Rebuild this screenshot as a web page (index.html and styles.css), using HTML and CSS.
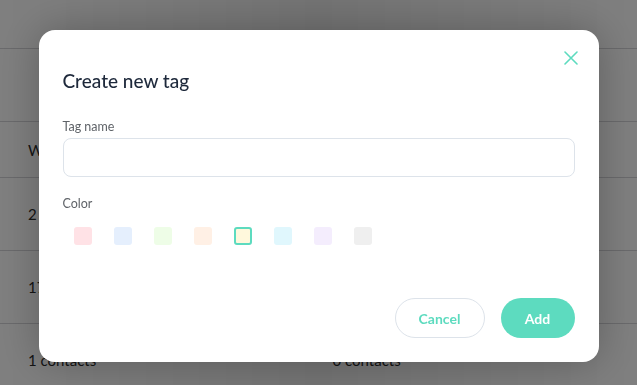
FILE: index.html
```html
<!DOCTYPE html>
<html lang="en">
<head>
<meta charset="utf-8">
<title>Create new tag</title>
<link rel="stylesheet" href="styles.css">
</head>
<body>
<div class="page">
  <div class="row row-top"></div>
  <div class="row row-filter"></div>
  <div class="row row-head"><span class="cell">W</span><span class="cell"></span></div>
  <div class="row"><span class="cell">2</span><span class="cell"></span></div>
  <div class="row"><span class="cell">17</span><span class="cell"></span></div>
  <div class="row"><span class="cell">1 contacts</span><span class="cell">0 contacts</span></div>
</div>
<div class="overlay">
  <div class="modal">
    <button class="close" aria-label="Close">
      <svg width="14" height="14" viewBox="0 0 14 14"><path d="M1 1L13 13M13 1L1 13" stroke="#5ddbbf" stroke-width="1.6" stroke-linecap="round"/></svg>
    </button>
    <h2 class="title">Create new tag</h2>
    <label class="label" for="tagname">Tag name</label>
    <input class="input" id="tagname" type="text">
    <div class="label label-color">Color</div>
    <div class="swatches">
      <span class="swatch pink"></span>
      <span class="swatch blue"></span>
      <span class="swatch green"></span>
      <span class="swatch peach"></span>
      <span class="swatch yellow selected"></span>
      <span class="swatch cyan"></span>
      <span class="swatch lavender"></span>
      <span class="swatch grey"></span>
    </div>
    <div class="actions">
      <button class="btn btn-cancel">Cancel</button>
      <button class="btn btn-add">Add</button>
    </div>
  </div>
</div>
</body>
</html>
```

FILE: styles.css
```css
* { box-sizing: border-box; }
html, body { margin: 0; padding: 0; }
body {
  width: 637px;
  height: 385px;
  overflow: hidden;
  font-family: Lato, "Noto Sans", sans-serif;
  background: #ffffff;
}
.page {
  display: flex;
  flex-direction: column;
}
.row {
  height: 73px;
  border-bottom: 1px solid #d4d4d8;
  display: flex;
  align-items: center;
  padding-left: 28px;
  font-size: 15px;
  color: #2b2b2b;
}
.row-top { height: 49px; }
.row-filter { height: 73px; }
.row-head { height: 56px; }
.cell { width: 307px; }
.overlay {
  position: fixed;
  inset: 0;
  background: linear-gradient(90deg, rgba(0,0,0,0.5), rgba(0,0,0,0.55) 50%, rgba(0,0,0,0.5));
  display: flex;
  justify-content: center;
  align-items: flex-start;
  padding-top: 30px;
}
.modal {
  position: relative;
  width: 560px;
  height: 332px;
  background: #ffffff;
  border-radius: 16px;
  padding: 39px 24px 24px;
  display: flex;
  flex-direction: column;
  box-shadow: 0 0 40px rgba(0,0,0,0.25);
}
.close {
  position: absolute;
  top: 21px;
  right: 21px;
  width: 14px;
  height: 14px;
  padding: 0;
  border: 0;
  background: none;
  display: flex;
}
.title {
  margin: 0 0 26px;
  font-size: 19px;
  line-height: 24px;
  font-weight: 500;
  color: #1e293b;
}
.label {
  font-size: 12.5px;
  line-height: 16px;
  color: #5f6368;
  margin-bottom: 3px;
}
.input {
  height: 39px;
  width: 100%;
  border: 1px solid #dde3ea;
  border-radius: 8px;
  outline: none;
  font: inherit;
  margin-bottom: 19px;
}
.label-color { margin-bottom: 0; }
.swatches {
  display: flex;
  gap: 22px;
  padding-left: 11px;
  margin-top: 15px;
}
.swatch {
  width: 18px;
  height: 18px;
  border-radius: 3px;
}
.pink { background: #ffe2e6; }
.blue { background: #e5effd; }
.green { background: #eefde7; }
.peach { background: #fff0e5; }
.yellow { background: #fff8dc; }
.cyan { background: #e0f7fd; }
.lavender { background: #f4edfd; }
.grey { background: #efefef; }
.selected { border: 2px solid #5ddbbf; }
.actions {
  margin-top: auto;
  display: flex;
  justify-content: flex-end;
  gap: 16px;
}
.btn {
  height: 40px;
  border-radius: 20px;
  font-family: inherit;
  font-size: 14px;
  font-weight: 700;
  cursor: pointer;
}
.btn-cancel {
  width: 90px;
  background: #ffffff;
  border: 1px solid #dde3ea;
  color: #5ddbbf;
}
.btn-add {
  width: 74px;
  background: #5ddbbf;
  border: 0;
  color: #ffffff;
}
```
